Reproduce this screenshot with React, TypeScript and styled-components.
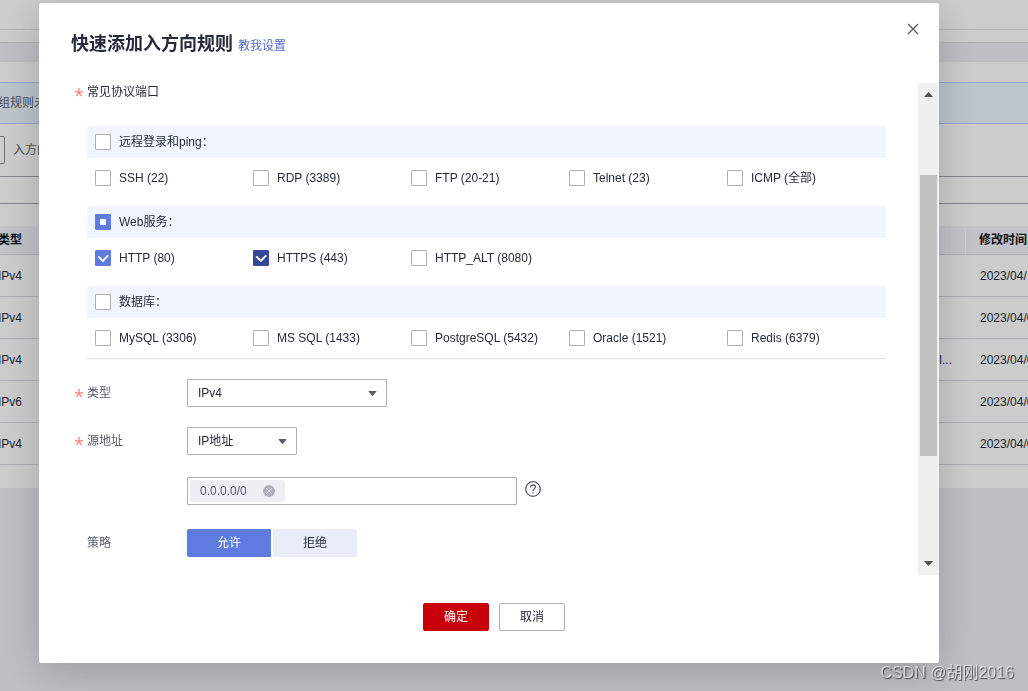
import React, { useEffect, useRef, useState } from "react";
import styled, { createGlobalStyle, css } from "styled-components";

const GlobalStyle = createGlobalStyle`
  * { box-sizing: border-box; }
  body {
    margin: 0;
    background: #eeeff5;
    color: #252b3a;
    font-family: "Liberation Sans", "Noto Sans CJK SC", sans-serif;
    font-size: 12px;
    line-height: 18px;
  }
  button, input, select { font: inherit; color: inherit; margin: 0; }
`;

/* ---------- page behind the dialog ---------- */

const Page = styled.div`
  min-height: 100vh;
  overflow: hidden;
  background: #eeeff5;
`;

const TopBar = styled.header`
  height: 30px;
  background: #fff;
  border-bottom: 1px solid #dfe1e6;
`;

const SubBar = styled.div`
  height: 13px;
  background: #fff;
  border-bottom: 1px solid #dadce2;
`;

const Sheet = styled.main`
  margin-top: 19px;
  height: 426px;
  padding-top: 20px;
  background: #fff;
`;

const Alert = styled.div`
  height: 42px;
  padding: 11px 0;
  background: #ebf6ff;
  border: solid #b9ccfe;
  border-width: 1px 0;
  color: #575d6c;
  text-indent: -2px;
  white-space: nowrap;
`;

const Toolbar = styled.div`
  display: flex;
  align-items: center;
  gap: 8px;
  height: 53px;
  border-bottom: 1px solid #a4a8b4;
  color: #575d6c;
`;

const ToolbarField = styled.div`
  width: 5px;
  height: 28px;
  border: 1px solid #8a8e99;
  border-left: 0;
  border-radius: 0 2px 2px 0;
`;

const Divider = styled.div`
  height: 27px;
  margin-bottom: 22px;
  border-bottom: 1px solid #a4a8b4;
`;

const RulesTable = styled.table`
  width: 100%;
  table-layout: fixed;
  border-collapse: separate;
  border-spacing: 0;
  white-space: nowrap;

  th, td { padding: 0; text-align: left; border-bottom: 1px solid #d5d9e4; }
  th { height: 29px; background: #f2f4fb; font-weight: 700; color: #10131c; }
  td { height: 42px; }
  tr > :first-child { text-indent: -2px; }
`;

const DescriptionCell = styled.td`
  && { text-align: right; padding-right: 13px; color: #1f2e78; }
`;

const TimeHead = styled.th`
  width: 63px;
  && { padding-left: 13px; border-left: 1px solid #fff; }
`;

const TimeCell = styled.td`
  && { padding-left: 15px; }
`;

/* ---------- dialog ---------- */

const Overlay = styled.div`
  position: fixed;
  inset: 0;
  padding: 3px 89px 28px 39px;
  background: rgba(0, 0, 0, 0.2);
`;

const Dialog = styled.section`
  display: flex;
  flex-direction: column;
  width: 100%;
  height: 100%;
  background: #fff;
  border-radius: 2px;
  box-shadow: 0 8px 40px rgba(0, 0, 0, 0.2);
`;

const DialogHeader = styled.header`
  display: flex;
  align-items: flex-start;
  justify-content: space-between;
  flex: none;
  height: 80px;
  padding: 16px 16px 0 32px;
`;

const TitleLine = styled.div`
  display: flex;
  align-items: baseline;
  gap: 5px;
  padding-top: 11px;
`;

const Title = styled.h1`
  margin: 0;
  font-size: 18px;
  line-height: 28px;
  font-weight: 700;
`;

const HelpLink = styled.a`
  color: #526ecc;
  text-decoration: none;
`;

const CloseButton = styled.button`
  display: grid;
  place-items: center;
  width: 20px;
  height: 20px;
  padding: 0;
  border: 0;
  background: none;
`;

const DialogBody = styled.div`
  display: flex;
  flex: 1;
  min-height: 0;
`;

const Content = styled.div`
  flex: 1;
  min-width: 0;
  overflow: hidden;
  padding: 0 32px 0 36px;
`;

const ScrollTrack = styled.div`
  display: grid;
  grid-template-rows: 5px 78fr 281fr 105fr 5px;
  justify-items: center;
  width: 21px;
  padding: 9px 2px;
  background: #f0f0f0;
`;

const ScrollThumb = styled.div`
  grid-row: 3;
  width: 100%;
  background: #c1c1c1;
`;

const ScrollEnd = styled.svg`
  grid-row: 5;
`;

const FieldLabel = styled.span<{ $strong?: boolean }>`
  display: flex;
  flex: none;
  width: 112px;
  white-space: nowrap;
  color: ${(p) => (p.$strong ? "#252b3a" : "#575d6c")};
`;

const Star = styled.span`
  display: flex;
  align-items: center;
  flex: none;
  width: 12px;
  height: 18px;
`;

const Groups = styled.div`
  display: flex;
  flex-direction: column;
  gap: 8px;
  margin: 25px 0 20px 12px;
  border-bottom: 1px solid #dfe1e6;
`;

const Group = styled.fieldset`
  min-width: 0;
  margin: 0;
  padding: 0;
  border: 0;
`;

const GroupHeader = styled.div`
  display: flex;
  align-items: center;
  height: 32px;
  padding-left: 8px;
  background: #f1f5fe;
`;

const Options = styled.div`
  display: grid;
  grid-template-columns: repeat(5, minmax(0, 1fr));
  align-items: center;
  height: 40px;
  padding: 0 1px 0 8px;
`;

const CheckLabel = styled.label`
  display: flex;
  align-items: center;
  gap: 8px;
  white-space: nowrap;
`;

const BoxWrap = styled.span`
  position: relative;
  display: flex;
  flex: none;
  width: 16px;
  height: 16px;

  svg { position: absolute; inset: 0; pointer-events: none; }
`;

const Box = styled.input<{ $dark?: boolean }>`
  appearance: none;
  width: 16px;
  height: 16px;
  border: 1px solid #adb0b8;
  border-radius: 1px;
  background: #fff;

  &:checked, &:indeterminate {
    background: ${(p) => (p.$dark ? "#344899" : "#5e7ce0")};
    border-color: ${(p) => (p.$dark ? "#344899" : "#5e7ce0")};
  }
`;

const Form = styled.div`
  display: flex;
  flex-direction: column;
  gap: 20px;
`;

const Field = styled.div<{ $roomy?: boolean }>`
  display: flex;
  align-items: center;
  padding: ${(p) => (p.$roomy ? "2px 0" : "0")};
`;

const SelectWrap = styled.div<{ $width: number }>`
  position: relative;
  width: ${(p) => p.$width}px;
  height: 28px;

  svg { position: absolute; right: 10px; top: 12px; pointer-events: none; }
`;

const frame = css`
  border: 1px solid #adb0b8;
  border-radius: 1px;
  background: #fff;
`;

const Select = styled.select`
  ${frame}
  appearance: none;
  width: 100%;
  height: 28px;
  padding: 0 24px 0 10px;
`;

const ChipBox = styled.div`
  ${frame}
  display: flex;
  align-items: center;
  width: 330px;
  height: 28px;
  padding: 0 2px;
`;

const Chip = styled.span`
  display: flex;
  align-items: center;
  justify-content: space-between;
  width: 95px;
  height: 22px;
  padding: 0 10px;
  border-radius: 2px;
  background: #eeeff5;
  color: #575d6c;
`;

const PlainButton = styled.button`
  display: grid;
  place-items: center;
  padding: 0;
  border: 0;
  background: none;
`;

const HelpButton = styled(PlainButton)`
  margin: 0 0 4px 8px;
`;

const ChipInput = styled.input`
  flex: 1;
  min-width: 0;
  border: 0;
  outline: 0;
  background: none;
`;

const Segments = styled.div`
  display: flex;
  gap: 2px;
`;

const Segment = styled.button<{ $active: boolean }>`
  width: 84px;
  height: 28px;
  padding: 0;
  border: 0;
  background: ${(p) => (p.$active ? "#5e7ce0" : "#e9edfa")};
  color: ${(p) => (p.$active ? "#fff" : "#252b3a")};

  &:first-child { border-radius: 2px 0 0 2px; }
  &:last-child { border-radius: 0 2px 2px 0; }
`;

const DialogFooter = styled.footer`
  display: flex;
  justify-content: center;
  gap: 10px;
  flex: none;
  padding: 28px 0 32px 10px;
`;

const FooterButton = styled.button<{ $primary?: boolean }>`
  width: 66px;
  height: 28px;
  padding: 0;
  border: 1px solid ${(p) => (p.$primary ? "#c7000b" : "#adb0b8")};
  border-radius: 2px;
  background: ${(p) => (p.$primary ? "#c7000b" : "#fff")};
  color: ${(p) => (p.$primary ? "#fff" : "#252b3a")};
`;

const Watermark = styled.div`
  position: fixed;
  right: 14px;
  bottom: 6px;
  font-size: 16px;
  line-height: 24px;
  color: rgba(255, 255, 255, 0.6);
  text-shadow: 1px 1px 1px rgba(0, 0, 0, 0.6);
`;

/* ---------- drawings ---------- */

const Asterisk = () => (
  <Star aria-hidden="true">
    <svg width="8" height="18" viewBox="0 0 8 18" fill="none" stroke="#fa8a86" strokeWidth="1.4">
      <path d="M4 9.6V5M4 9.6L0 8.2M4 9.6l4-1.4M4 9.6l-2.6 3.6M4 9.6l2.6 3.6" />
    </svg>
  </Star>
);

const SelectArrow = () => (
  <svg width="9" height="5" viewBox="0 0 9 5" fill="#575d6c">
    <path d="M.8 0h7.4q.7 0 .2.6L5 4.7q-.5.5-1 0L.6.6Q.1 0 .8 0z" />
  </svg>
);

/* ---------- parts ---------- */

type CheckProps = { text: string; checked?: boolean; partial?: boolean; dark?: boolean };

function Check({ text, checked = false, partial = false, dark }: CheckProps) {
  const ref = useRef<HTMLInputElement>(null);
  const [on, setOn] = useState(checked);
  useEffect(() => {
    if (ref.current) ref.current.indeterminate = partial;
  }, [partial]);
  return (
    <CheckLabel>
      <BoxWrap>
        <Box ref={ref} type="checkbox" $dark={dark} checked={on} onChange={(e) => setOn(e.target.checked)} />
        {on && (
          <svg width="16" height="16" viewBox="0 0 16 16" fill="none" stroke="#fff" strokeWidth="1.9">
            <path d="M3.2 6.4l4.6 4.6L13.2 5.4" />
          </svg>
        )}
        {partial && !on && (
          <svg width="16" height="16" viewBox="0 0 16 16" fill="#fff">
            <rect x="5" y="5" width="6" height="6" rx=".5" />
          </svg>
        )}
      </BoxWrap>
      {text}
    </CheckLabel>
  );
}

const groups: { head: CheckProps; items: CheckProps[] }[] = [
  {
    head: { text: "远程登录和ping：" },
    items: [
      { text: "SSH (22)" },
      { text: "RDP (3389)" },
      { text: "FTP (20-21)" },
      { text: "Telnet (23)" },
      { text: "ICMP (全部)" },
    ],
  },
  {
    head: { text: "Web服务：", partial: true },
    items: [
      { text: "HTTP (80)", checked: true },
      { text: "HTTPS (443)", checked: true, dark: true },
      { text: "HTTP_ALT (8080)" },
    ],
  },
  {
    head: { text: "数据库：" },
    items: [
      { text: "MySQL (3306)" },
      { text: "MS SQL (1433)" },
      { text: "PostgreSQL (5432)" },
      { text: "Oracle (1521)" },
      { text: "Redis (6379)" },
    ],
  },
];

const rules = [
  { type: "IPv4", note: "", time: "2023/04/" },
  { type: "IPv4", note: "", time: "2023/04/0" },
  { type: "IPv4", note: "l...", time: "2023/04/0" },
  { type: "IPv6", note: "", time: "2023/04/0" },
  { type: "IPv4", note: "", time: "2023/04/0" },
];

export default function App() {
  const [policy, setPolicy] = useState("允许");
  return (
    <>
      <GlobalStyle />
      <Page>
        <TopBar />
        <SubBar />
        <Sheet>
          <Alert>组规则未</Alert>
          <Toolbar>
            <ToolbarField />
            <span>入方向</span>
          </Toolbar>
          <Divider />
          <RulesTable>
            <thead>
              <tr>
                <th>类型</th>
                <th />
                <TimeHead>修改时间</TimeHead>
              </tr>
            </thead>
            <tbody>
              {rules.map((r, i) => (
                <tr key={i}>
                  <td>{r.type}</td>
                  <DescriptionCell>{r.note}</DescriptionCell>
                  <TimeCell>{r.time}</TimeCell>
                </tr>
              ))}
            </tbody>
          </RulesTable>
        </Sheet>
      </Page>

      <Overlay>
        <Dialog role="dialog" aria-labelledby="dialog-title">
          <DialogHeader>
            <TitleLine>
              <Title id="dialog-title">快速添加入方向规则</Title>
              <HelpLink href="#help">教我设置</HelpLink>
            </TitleLine>
            <CloseButton aria-label="关闭">
              <svg width="12" height="12" viewBox="0 0 12 12" fill="none" stroke="#575d6c" strokeWidth="1.3">
                <path d="M1 1l10 10M11 1L1 11" />
              </svg>
            </CloseButton>
          </DialogHeader>

          <DialogBody>
            <Content>
              <FieldLabel $strong>
                <Asterisk />
                常见协议端口
              </FieldLabel>
              <Groups>
                {groups.map((g) => (
                  <Group key={g.head.text}>
                    <GroupHeader>
                      <Check {...g.head} />
                    </GroupHeader>
                    <Options>
                      {g.items.map((item) => (
                        <Check key={item.text} {...item} />
                      ))}
                    </Options>
                  </Group>
                ))}
              </Groups>

              <Form>
                <Field>
                  <FieldLabel as="label" htmlFor="rule-type">
                    <Asterisk />
                    类型
                  </FieldLabel>
                  <SelectWrap $width={200}>
                    <Select id="rule-type">
                      <option>IPv4</option>
                    </Select>
                    <SelectArrow />
                  </SelectWrap>
                </Field>
                <Field>
                  <FieldLabel as="label" htmlFor="rule-source">
                    <Asterisk />
                    源地址
                  </FieldLabel>
                  <SelectWrap $width={110}>
                    <Select id="rule-source">
                      <option>IP地址</option>
                    </Select>
                    <SelectArrow />
                  </SelectWrap>
                </Field>
                <Field $roomy>
                  <FieldLabel />
                  <ChipBox>
                    <Chip>
                      0.0.0.0/0
                      <PlainButton aria-label="移除">
                        <svg width="12" height="12" viewBox="0 0 12 12">
                          <circle cx="6" cy="6" r="6" fill="#adb0b8" />
                          <path d="M3.2 3.2l5.6 5.6M8.8 3.2L3.2 8.8" stroke="#eeeff5" strokeWidth="1" />
                        </svg>
                      </PlainButton>
                    </Chip>
                    <ChipInput aria-label="源地址" />
                  </ChipBox>
                  <HelpButton aria-label="帮助">
                    <svg width="16" height="16" viewBox="0 0 16 16" fill="none" stroke="#575d6c" strokeWidth="1.3">
                      <circle cx="8" cy="8" r="7.3" />
                      <path d="M5.6 6.4C5.6 4.8 6.6 4 8 4s2.4.8 2.4 2.1C10.4 7.7 8 7.9 8 9.9" />
                      <path d="M8 11.2v1.4" />
                    </svg>
                  </HelpButton>
                </Field>
                <Field $roomy>
                  <FieldLabel>
                    <Star />
                    策略
                  </FieldLabel>
                  <Segments role="group" aria-label="策略">
                    {["允许", "拒绝"].map((name) => (
                      <Segment
                        key={name}
                        $active={policy === name}
                        aria-pressed={policy === name}
                        onClick={() => setPolicy(name)}
                      >
                        {name}
                      </Segment>
                    ))}
                  </Segments>
                </Field>
              </Form>
            </Content>
            <ScrollTrack aria-hidden="true">
              <svg width="9" height="5" viewBox="0 0 9 5" fill="#505050">
                <path d="M0 5h9L4.5 0z" />
              </svg>
              <ScrollThumb />
              <ScrollEnd width="9" height="5" viewBox="0 0 9 5" fill="#505050">
                <path d="M0 0h9L4.5 5z" />
              </ScrollEnd>
            </ScrollTrack>
          </DialogBody>

          <DialogFooter>
            <FooterButton $primary>确定</FooterButton>
            <FooterButton>取消</FooterButton>
          </DialogFooter>
        </Dialog>
      </Overlay>
      <Watermark>CSDN @胡刚2016</Watermark>
    </>
  );
}
